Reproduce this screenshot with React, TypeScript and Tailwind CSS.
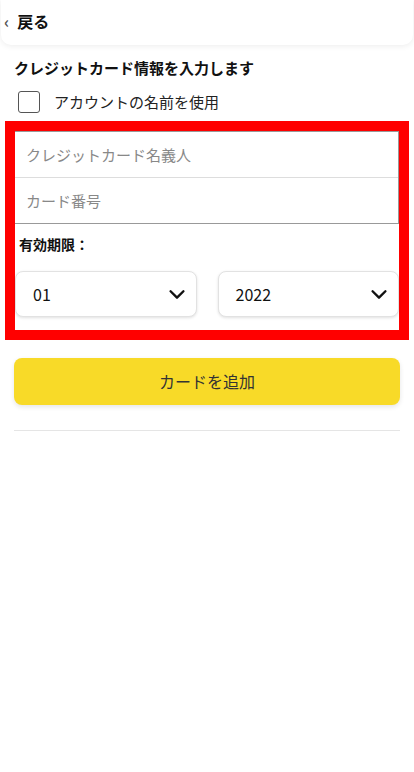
import { useState } from "react"

const Chevron = () => (
	<svg viewBox="0 0 24 24" className="h-[22px] w-[22px]" fill="none" stroke="#111" strokeWidth={2.6} strokeLinecap="round" strokeLinejoin="round">
		<path d="M5 9l7 7 7-7" />
	</svg>
)

const SelectBox = ({ value }: { value: string }) => (
	<div className="flex h-[46px] flex-1 items-center justify-between rounded-[8px] border border-[#e2e2e2] bg-white pl-[17px] pr-[8px] shadow-[0_1px_3px_rgba(0,0,0,0.12)]">
		<span className="text-[16px] text-[#111]">{value}</span>
		<Chevron />
	</div>
)

const App = () => {
	const [checked, setChecked] = useState(false)

	return (
		<div className="min-h-[772px] w-full bg-white font-['Noto_Sans_CJK_JP','Noto_Sans',sans-serif] text-[#111]">
			<header className="mx-[1px] flex h-[45px] items-center gap-[8px] rounded-b-[10px] bg-white px-[3px] pb-[4px] shadow-[0_1px_6px_rgba(0,0,0,0.08)]">
				<span className="text-[16px] font-bold leading-none text-[#555]">‹</span>
				<span className="text-[16px] font-bold">戻る</span>
			</header>

			<h2 className="mt-[13px] px-[14px] text-[15px] font-bold leading-[20px]">クレジットカード情報を入力します</h2>

			<label className="mt-[13px] flex items-center gap-[14px] px-[18px]">
				<input
					type="checkbox"
					checked={checked}
					onChange={() => setChecked(!checked)}
					className="h-[22px] w-[22px] appearance-none rounded-[3px] border border-[#555] bg-white"
				/>
				<span className="text-[15px] text-[#222]">アカウントの名前を使用</span>
			</label>

			<section className="mx-[5px] mt-[7px] border-[10px] border-[#ff0000] bg-white pb-[13px]">
				<div className="border border-l-0 border-[#999]">
					<input
						placeholder="クレジットカード名義人"
						className="block h-[46px] w-full border-b border-[#ddd] px-[11px] text-[15px] placeholder:text-[#888] outline-none"
					/>
					<input
						placeholder="カード番号"
						className="block h-[45px] w-full px-[11px] text-[15px] placeholder:text-[#888] outline-none"
					/>
				</div>

				<p className="mt-[10px] px-[4px] text-[14px] font-bold leading-[20px]">有効期限：</p>

				<div className="mt-[17px] flex gap-[21px]">
					<SelectBox value="01" />
					<SelectBox value="2022" />
				</div>
			</section>

			<div className="px-[14px] pt-[18px]">
				<button className="flex h-[47px] w-full items-center justify-center rounded-[8px] bg-[#f8da28] text-[16px] text-[#333] shadow-[0_2px_5px_rgba(0,0,0,0.1)]">
					カードを追加
				</button>
				<div className="mt-[25px] h-px bg-[#e5e5e5]" />
			</div>
		</div>
	)
}

export default App
